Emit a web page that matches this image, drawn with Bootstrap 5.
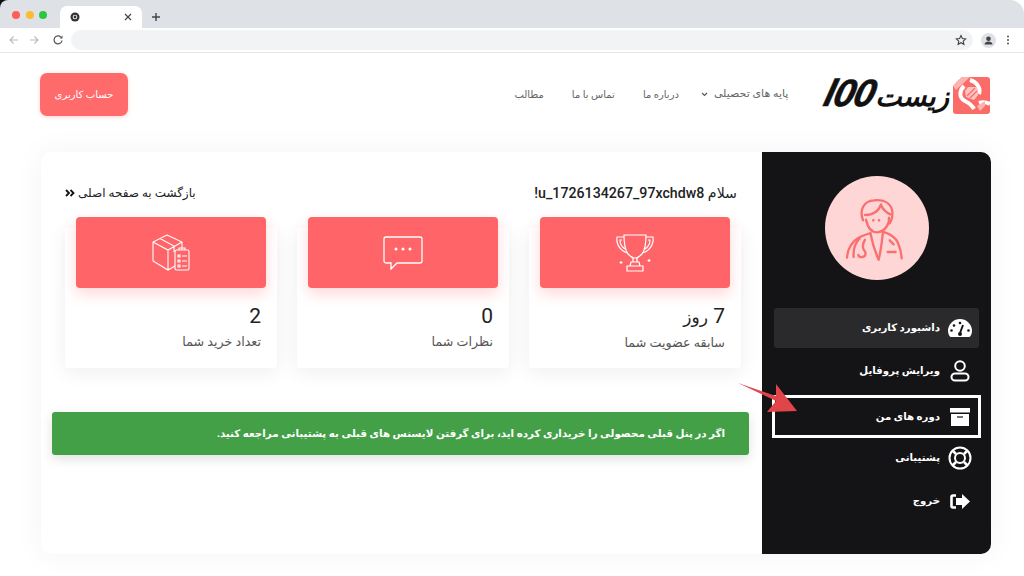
<!DOCTYPE html>
<html lang="fa">
<head>
<meta charset="UTF-8">
<title>Zist100</title>
<link href="https://cdn.jsdelivr.net/npm/bootstrap@5.3.0/dist/css/bootstrap.min.css" rel="stylesheet">
<style>
html,body{height:576px;overflow:hidden}
body{background:#fff;font-family:Roboto,"DejaVu Sans",sans-serif;color:#222}
.frame-top{background:linear-gradient(90deg,#111 50%,#fff 50%)}
.tab-strip{height:28px;background:#dee1e6;border-radius:8px 14px 0 0;padding-left:60px}
.dots{position:absolute;left:12px;top:11px;gap:5.500px}
.dots i{display:block;width:8px;height:8px;border-radius:50%}
.tab-shape{width:82px;height:22px;margin-top:6px;background:#fff;border-radius:7px 7px 0 0;padding:0 10px}
.plus-mark{margin:11px 0 0 8px}
.tool-bar{height:25px;background:#fff;border-bottom:1px solid #e6e7ea;padding:0 12px 0 8px}
.reload-mark{margin-left:-2px}
.url-box{height:20px;background:#f1f3f4;border-radius:10px;margin:0 8px 0 7px;padding-right:2px}
.site-head{height:99px;padding:22px 34px 0 40px}
.brand-text{font-family:"DejaVu Sans",sans-serif;font-weight:700;font-style:italic;font-size:28px;line-height:37px;color:#111;margin-right:4px;white-space:nowrap}
.brand-num{font-family:"Liberation Sans",sans-serif;font-weight:700;font-size:38px;letter-spacing:-1px;display:inline-block;transform:skewX(-14deg);-webkit-text-stroke:.6px #111}
.top-links{font-size:10px;color:#666;gap:28px;margin-right:37px;margin-top:-2px;height:43px}
.top-links a{color:#666;text-decoration:none}
.top-links .has-menu{font-size:11px;gap:6px;margin-left:-6px}
.account-btn{width:88px;height:43px;margin-top:-2px;background:#ff6b6b;color:#fff;font-size:10px;border-radius:7px;border:0;padding:0;box-shadow:0 1px 4px rgba(255,107,107,.3)}
.panel-box{margin:0 33px 0 41px;width:950px;height:402px;background:#fff;border-radius:10px;box-shadow:0 0 30px rgba(30,30,60,.05);position:relative}
.side-bar{width:229px;background:#141417;border-radius:0 10px 10px 0;padding:24px 12px 0 12px;flex:none}
.avatar-disc{width:104px;height:104px;border-radius:50%;background:#ffd6d6;margin:0 auto 28px}
.side-item{height:40px;margin-bottom:3px;padding:0 7px 0 0;border-radius:3px;color:#fff;font-size:10.2px;font-weight:700;gap:8px;text-decoration:none}
.side-item svg{flex:none}
.side-item.current{background:#2a2a2d}
.side-item.before-mark{margin-bottom:6px}
.side-item.marked{outline:3px solid #fff;outline-offset:-1px;border-radius:0;height:39px;margin-bottom:2px}
.main-area{padding:32px 13px 0 11px}
.hello-row{font-size:14.2px;font-weight:500;line-height:18px;padding:0 12px 0 13px;margin-bottom:15px}
.back-link{font-size:12px;font-weight:400;color:#222;text-decoration:none;gap:3px}
.stat-row{gap:20px;padding:0 8px 0 13px;margin-bottom:44px}
.stat-card{width:212px;height:140px;margin-top:11px;background:#fff;border-radius:4px;box-shadow:0 4px 20px rgba(30,30,60,.07);border:0}
.stat-top{height:71px;margin:-11px 11px 0;background:#ff6468;border-radius:4px;box-shadow:0 6px 14px rgba(255,100,104,.25)}
.stat-num{font-size:21px;line-height:26px;margin:15px 16px 0 0;color:#222;font-weight:400}
.stat-num span{font-size:17px}
.stat-label{font-size:12.700px;line-height:16px;margin:5px 16px 0 0;color:#555}
.green-note{height:43px;background:#43a047;color:#fff;font-size:10.3px;font-weight:700;border:0;border-radius:3px;margin:0;padding:0 24px;box-shadow:0 4px 12px rgba(0,0,0,.12)}
.red-arrow{position:absolute;left:695px;top:228px}
</style>
</head>
<body>
<div class="frame-top" dir="ltr">
  <div class="tab-strip d-flex position-relative">
    <div class="dots d-flex"><i style="background:#ff5f57"></i><i style="background:#febc2e"></i><i style="background:#28c840"></i></div>
    <div class="tab-shape d-flex align-items-center justify-content-between">
      <svg width="10" height="10" viewBox="0 0 10 10"><circle cx="5" cy="5" r="4.500" fill="#333"/><circle cx="5" cy="5" r="2.300" fill="#fff"/><circle cx="5" cy="5" r="1.400" fill="#333"/></svg>
      <svg width="8" height="8" viewBox="0 0 8 8"><path d="M1 1l6 6M7 1L1 7" stroke="#444" stroke-width="1.200"/></svg>
    </div>
    <svg class="plus-mark" width="12" height="12" viewBox="0 0 12 12"><path d="M6 2v8M2 6h8" stroke="#444" stroke-width="1.400"/></svg>
  </div>
</div>
<div class="tool-bar d-flex align-items-center" dir="ltr">
  <svg width="12" height="12" viewBox="0 0 12 12" class="me-2"><path d="M10 6H2M5.500 2.500L2 6l3.500 3.500" fill="none" stroke="#bbb" stroke-width="1.100"/></svg>
  <svg width="12" height="12" viewBox="0 0 12 12" class="me-2"><path d="M2 6h8M6.500 2.500L10 6 6.500 9.500" fill="none" stroke="#bbb" stroke-width="1.100"/></svg>
  <svg width="12" height="12" viewBox="0 0 12 12" class="reload-mark ms-1"><path d="M10 6.500A4 4 0 1 1 8.800 3" fill="none" stroke="#555" stroke-width="1.200"/><path d="M10.500 1.500v3h-3z" fill="#555"/></svg>
  <div class="url-box flex-grow-1 d-flex align-items-center justify-content-end">
    <svg width="12" height="12" viewBox="0 0 24 24" class="me-1"><path d="M12 3l2.800 6 6.500.8-4.800 4.400 1.300 6.500L12 17.500l-5.800 3.200 1.300-6.500L2.700 9.800 9.200 9z" fill="none" stroke="#444" stroke-width="2.200"/></svg>
  </div>
  <svg width="15" height="15" viewBox="0 0 15 15"><circle cx="7.500" cy="7.500" r="7.500" fill="#dee1e6"/><circle cx="7.500" cy="5.800" r="2.300" fill="#444"/><path d="M3.500 11.500c0-2 2-3 4-3s4 1 4 3z" fill="#444"/></svg>
  <svg width="12" height="12" viewBox="0 0 12 12" class="ms-1"><g fill="#555"><circle cx="8" cy="2.500" r="1"/><circle cx="8" cy="6" r="1"/><circle cx="8" cy="9.500" r="1"/></g></svg>
</div>

<div dir="rtl">
  <header class="site-head d-flex align-items-start">
    <a class="d-flex align-items-center text-decoration-none" href="#">
      <svg width="37" height="37" viewBox="0 0 37 37">
        <path d="M9 0h25a3 3 0 0 1 3 3v31a3 3 0 0 1-3 3H3a3 3 0 0 1-3-3V9z" fill="#fb6b68"/>
        <path d="M5 3l5-3h7L3 13 0 9z" fill="#fdb4b0"/>
        <path d="M11 9c-5 5-5 12 1 15 4 2 7 4 9 8" fill="none" stroke="#fff" stroke-width="4"/>
        <path d="M17 3c7 2 11 8 9 14M26 26c3-1 7-1 11 1" fill="none" stroke="#fff" stroke-width="4"/>
        <path d="M15 10h9l1 8-4 5-8-3-1-6z" fill="#fdc4c0"/>
        <path d="M14 19l8-8M17 21l7-7" stroke="#fb6b68" stroke-width="1.200"/>
        <path d="M24 29l8-5v5l-5 5z" fill="#fdb4b0"/>
      </svg>
      <span class="brand-text">زیست<span class="brand-num" dir="ltr">l00</span></span>
    </a>
    <nav class="top-links d-flex align-items-center">
      <a href="#" class="has-menu d-flex align-items-center">پایه های تحصیلی
        <svg width="7" height="5" viewBox="0 0 7 5"><path d="M1 1l2.500 2.500L6 1" fill="none" stroke="#555" stroke-width="1.100"/></svg></a>
      <a href="#">درباره ما</a>
      <a href="#">تماس با ما</a>
      <a href="#">مطالب</a>
    </nav>
    <button class="account-btn btn me-auto">حساب کاربری</button>
  </header>

  <section class="panel-box d-flex">
    <aside class="side-bar">
      <div class="avatar-disc d-flex align-items-center justify-content-center">
        <svg width="75" height="75" viewBox="0 0 225 225" fill="none" stroke="#fa6f70" stroke-width="7" stroke-linecap="round" stroke-linejoin="round">
          <path d="M72 88C60 55 75 30 105 28c30-3 52 8 55 35 1 12-2 25-8 34"/>
          <path d="M78 72c20 0 40-8 48-32M126 42c6 14 14 22 28 28"/>
          <path d="M150 80c2 16-10 42-35 44-20 0-30-20-34-38"/>
          <path d="M103 88h.1M120 88h.1" stroke-width="8"/>
          <path d="M95 126c-20 6-45 14-60 38-8 12-10 24-11 36"/>
          <path d="M131 122c20 6 38 14 46 34 6 14 10 30 11 46"/>
          <path d="M95 130c5 25 14 55 24 76 6-25 10-55 13-84"/>
          <path d="M62 142c-14 14-20 32-18 56"/>
          <path d="M78 146c-6 10-8 22-4 30 8 8 8 20-4 22-8 1-12-2-12-6"/>
          <path d="M146 183h24M152 148l12 12"/>
        </svg>
      </div>
      <a class="side-item current d-flex align-items-center" href="#">
        <svg width="24" height="20" viewBox="0 0 24 20"><path d="M12 1a12 12 0 0 1 12 11c0 3-.500 4.500-1.500 6a2 2 0 0 1-1.500 1H3a2 2 0 0 1-1.500-1C.500 16.500 0 15 0 12A12 12 0 0 1 12 1z" fill="#fff"/><path d="M12 15l3-8" stroke="#141417" stroke-width="2"/><g fill="#141417"><circle cx="12" cy="16" r="2"/><circle cx="12" cy="5" r="1.300"/><circle cx="6" cy="7.500" r="1.300"/><circle cx="3.500" cy="12.500" r="1.300"/><circle cx="20.500" cy="12.500" r="1.300"/></g></svg>
        داشبورد کاربری
      </a>
      <a class="side-item before-mark d-flex align-items-center" href="#">
        <svg width="24" height="22" viewBox="0 0 24 22" fill="none" stroke="#fff" stroke-width="2"><circle cx="12" cy="6" r="4.800"/><path d="M7 13.500h10a3.500 3.500 0 0 1 0 7H7a3.500 3.500 0 0 1 0-7z"/></svg>
        ویرایش پروفایل
      </a>
      <a class="side-item marked d-flex align-items-center" href="#">
        <svg width="24" height="18" viewBox="0 0 24 18"><path d="M2 0h20v4.500H2z" fill="#fff"/><path d="M3 6h18v12H3z" fill="#fff"/><path d="M9 9h6" stroke="#141417" stroke-width="1.200"/></svg>
        دوره های من
      </a>
      <a class="side-item d-flex align-items-center" href="#">
        <svg width="24" height="24" viewBox="0 0 24 24" fill="none" stroke="#fff" stroke-width="2"><circle cx="12" cy="12" r="10.500"/><circle cx="12" cy="12" r="5"/><path d="M8 8L4.500 4.500M16 8l3.500-3.500M8 16l-3.500 3.500M16 16l3.500 3.500" stroke-width="2.500"/></svg>
        پشتیبانی
      </a>
      <a class="side-item d-flex align-items-center" href="#">
        <svg width="24" height="15" viewBox="0 0 24 15"><path d="M8 1.500H5A1.500 1.500 0 0 0 3.500 3v9A1.500 1.500 0 0 0 5 13.500h3" fill="none" stroke="#fff" stroke-width="2.600"/><path d="M14 0l8 7.500-8 7.500v-4H8V4h6z" fill="#fff"/></svg>
        خروج
      </a>
    </aside>

    <main class="main-area flex-grow-1">
      <div class="hello-row d-flex justify-content-between align-items-center">
        <span>سلام u_1726134267_97xchdw8!</span>
        <a class="back-link d-flex align-items-center" href="#">بازگشت به صفحه اصلی
          <svg width="10" height="8" viewBox="0 0 10 8" fill="none" stroke="#111" stroke-width="1.800"><path d="M1 1l3 3-3 3M5.500 1l3 3-3 3"/></svg></a>
      </div>
      <div class="stat-row d-flex">
        <div class="stat-card card">
          <div class="stat-top d-flex align-items-center justify-content-center">
            <svg width="40" height="41" viewBox="0 0 40 41" fill="none" stroke="#fff" stroke-width="1.200"><path d="M9 3h22c0 9-1 15-4 19-2 2-5 4-7 4s-5-2-7-4c-3-4-4-10-4-19z"/><path d="M9 5H2c-1 7 3 14 11 16M31 5h7c1 7-3 14-11 16M7 8H5c0 4 2 7 5 9M33 8h2c0 4-2 7-5 9"/><path d="M18 26v4h4v-4M16 30h8l1 4h-10zM12 34h16v5H12z"/><path d="M6 29v3M4.500 30.500h3M34 27v3M32.500 28.500h3M9 36h.1M31 34h.1"/></svg>
          </div>
          <div class="stat-num">7 <span>روز</span></div>
          <div class="stat-label">سابقه عضویت شما</div>
        </div>
        <div class="stat-card card">
          <div class="stat-top d-flex align-items-center justify-content-center">
            <svg width="40" height="34" viewBox="0 0 40 34" fill="none" stroke="#fff" stroke-width="1.300"><path d="M3 1h34a2 2 0 0 1 2 2v22a2 2 0 0 1-2 2H14l-6 6v-6H3a2 2 0 0 1-2-2V3a2 2 0 0 1 2-2z"/><g fill="#fff" stroke="none"><circle cx="13" cy="13" r="1.500"/><circle cx="20" cy="13" r="1.500"/><circle cx="27" cy="13" r="1.500"/></g></svg>
          </div>
          <div class="stat-num">0</div>
          <div class="stat-label">نظرات شما</div>
        </div>
        <div class="stat-card card">
          <div class="stat-top d-flex align-items-center justify-content-center">
            <svg width="38" height="38" viewBox="0 0 38 38" fill="none" stroke="#fff" stroke-width="1.100"><path d="M15 1l15 7v9M15 1L1 8v19l15 9 7-4M1 8l15 8 14-8M16 16v20M8 4.500l14 7.500v6"/><rect x="23" y="16" width="14" height="20" rx="1.500" fill="#ff6468"/><path d="M27 16v-2h6v2"/><path d="M26 21h2v2h-2zM26 26h2v2h-2zM26 31h2v2h-2zM30 22h5M30 27h5M30 32h5"/></svg>
          </div>
          <div class="stat-num">2</div>
          <div class="stat-label">تعداد خرید شما</div>
        </div>
      </div>
      <div class="green-note alert d-flex align-items-center" role="alert">اگر در پنل قبلی محصولی را خریداری کرده اید، برای گرفتن لایسنس های قبلی به پشتیبانی مراجعه کنید.</div>
    </main>

    <svg class="red-arrow" width="64" height="32" viewBox="0 0 64 32"><path d="M2 3l38 13L40 4l21 27-30 1 9-11z" fill="#e0454a"/></svg>
  </section>
</div>
<script src="https://cdn.jsdelivr.net/npm/bootstrap@5.3.0/dist/js/bootstrap.bundle.min.js"></script>
</body>
</html>
